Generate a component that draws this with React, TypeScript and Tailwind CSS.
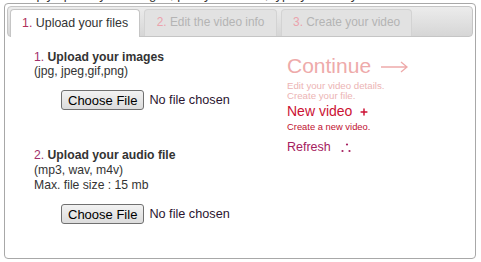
import { Plus } from 'lucide-react'

function FileInput() {
  return (
    <div className="flex items-center gap-[5px] pl-[27px]">
      <button className="h-[20px] rounded-[3px] border border-[#707070] bg-gradient-to-b from-[#f2f2f2] to-[#dcdcdc] px-[6px] text-[13px] leading-none text-black">
        Choose File
      </button>
      <span className="text-[12.7px] text-[#2b1530]">No file chosen</span>
    </div>
  )
}

function Tab({ num, label, active, w }: { num: string; label: string; active?: boolean; w?: string }) {
  return (
    <div
      className={
        active
          ? 'relative -mb-px flex h-[28px] items-center rounded-t-[4px] border border-b-0 border-[#c5c5c5] bg-white px-[11px] text-[12.4px] text-[#333]'
          : `flex h-[27px] ${w} items-center justify-center rounded-t-[4px] border border-b-0 border-[#d3d3d3] bg-[#e2e2e2] text-[11.9px] text-[#b4b4b4]`
      }
    >
      <span className={active ? 'text-[#b0305c]' : 'text-[#eba3ad]'}>{num}</span>
      <span>&nbsp;{label}</span>
    </div>
  )
}

export default function App() {
  return (
    <div className="h-[262px] w-[481px] overflow-hidden bg-white font-['Liberation_Sans',Arial,sans-serif]">
      <div className="-mt-[13px] h-[16px] pl-[14px] text-[13px] leading-[16px] text-[#333]">
        Simply upload your images, pick your audio, type your story
      </div>
      <div className="ml-[4px] flex h-[256px] w-[472px] flex-col rounded-[4px] border border-[#a8a8a8] p-[2px]">
        <div className="flex h-[31px] items-end gap-[4px] rounded-[4px] border border-[#c5c5c5] bg-gradient-to-b from-[#ececec] to-[#d6d6d6] px-[2px]">
          <Tab num="1." label="Upload your files" active />
          <Tab num="2." label="Edit the video info" w="w-[133px]" />
          <Tab num="3." label="Create your video" w="w-[131px]" />
        </div>

        <div className="flex pt-[13px]">
          <div className="w-[252px] pl-[27px] text-[12.2px] leading-[14px] text-[#333]">
            <div>
              <span className="text-[#a0306a]">1.</span> <span className="font-bold">Upload your images</span>
            </div>
            <div>(jpg, jpeg,gif,png)</div>
            <div className="mt-[12px]">
              <FileInput />
            </div>

            <div className="mt-[38px] leading-[15px]">
              <span className="text-[#a0306a]">2.</span> <span className="font-bold">Upload your audio file</span>
            </div>
            <div className="leading-[14.5px]">(mp3, wav, m4v)</div>
            <div className="leading-[14.5px]">Max. file size : 15 mb</div>
            <div className="mt-[12px]">
              <FileInput />
            </div>
          </div>

          <div className="flex flex-col pl-[28px] pt-[3px]">
            <div className="flex items-center text-[21px] leading-[26px] text-[#eeaaaa]">
              Continue
              <svg width="28" height="12" viewBox="0 0 28 12" className="ml-[10px] mt-[2px]">
                <path d="M0 6 H26 M20 1 L26 6 L20 11" fill="none" stroke="#eeaaaa" strokeWidth="1.3" />
              </svg>
            </div>
            <div className="mt-[2px] text-[9.7px] leading-[9.5px] text-[#ecb4b4]">
              Edit your video details.
              <br />
              Create your file.
            </div>
            <div className="mt-[3px] flex items-center text-[14px] leading-[17px] text-[#cc1133]">
              New video
              <Plus className="ml-[7px] h-[10px] w-[10px]" strokeWidth={3.5} />
            </div>
            <div className="mt-[1px] text-[9.4px] leading-[11px] text-[#c01030]">Create a new video.</div>
            <div className="mt-[8px] flex items-center text-[12.5px] leading-[15px] text-[#a52060]">
              Refresh
              <svg width="10" height="10" viewBox="0 0 10 10" className="ml-[10px]">
                <circle cx="1.5" cy="8" r="1.1" fill="#a52060" />
                <circle cx="6" cy="1.5" r="1.1" fill="#a52060" />
                <circle cx="8.5" cy="8" r="1.1" fill="#a52060" />
              </svg>
            </div>
          </div>
        </div>
      </div>
    </div>
  )
}
